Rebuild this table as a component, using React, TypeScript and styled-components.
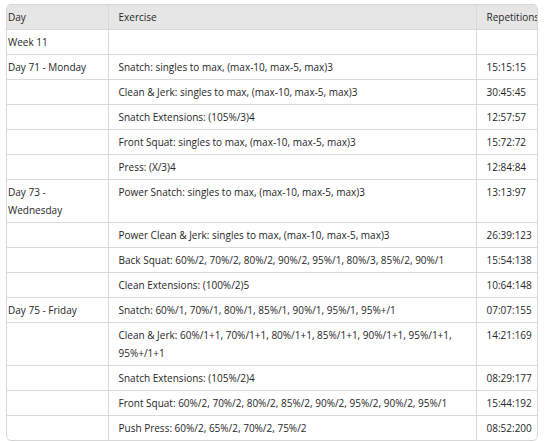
import React from "react";
import styled, { createGlobalStyle } from "styled-components";

const Global = createGlobalStyle`
  html, body { margin: 0; padding: 0; background: #ffffff; }
  body { font-family: "Open Sans", "Noto Sans", sans-serif; }
`;

const Page = styled.div`
  padding: 4px 0 0 6px;
`;

const Frame = styled.div`
  width: 530px;
  border: 1px solid #d6d6d6;
  border-radius: 5px;
  overflow: hidden;
`;

const Table = styled.table`
  border-collapse: collapse;
  table-layout: fixed;
  width: 560px;
  font-size: 10px;
  line-height: 18px;
  color: #262626;
`;

const HeadRow = styled.tr`
  background: #e6e6e6;
`;

const Cell = styled.td<{ $first?: boolean }>`
  padding: 3px 10px 3px ${(p) => (p.$first ? "1px" : "10px")};
  vertical-align: top;
  text-align: left;
  font-weight: normal;
  border-top: 1px solid #d9d9d9;
  border-left: ${(p) => (p.$first ? "none" : "1px solid #d9d9d9")};
`;

const HeadCell = styled(Cell).attrs({ as: "th" })`
  border-top: none;
`;

const Line = styled.span`
  display: block;
  white-space: nowrap;
`;

type Row = { day?: string; ex: string[]; reps: string };

const rows: Row[] = [
  { day: "Week 11", ex: [], reps: "" },
  { day: "Day 71 - Monday", ex: ["Snatch: singles to max, (max-10, max-5, max)3"], reps: "15:15:15" },
  { ex: ["Clean & Jerk: singles to max, (max-10, max-5, max)3"], reps: "30:45:45" },
  { ex: ["Snatch Extensions: (105%/3)4"], reps: "12:57:57" },
  { ex: ["Front Squat: singles to max, (max-10, max-5, max)3"], reps: "15:72:72" },
  { ex: ["Press: (X/3)4"], reps: "12:84:84" },
  { day: "Day 73 - Wednesday", ex: ["Power Snatch: singles to max, (max-10, max-5, max)3"], reps: "13:13:97" },
  { ex: ["Power Clean & Jerk: singles to max, (max-10, max-5, max)3"], reps: "26:39:123" },
  { ex: ["Back Squat: 60%/2, 70%/2, 80%/2, 90%/2, 95%/1, 80%/3, 85%/2, 90%/1"], reps: "15:54:138" },
  { ex: ["Clean Extensions: (100%/2)5"], reps: "10:64:148" },
  { day: "Day 75 - Friday", ex: ["Snatch: 60%/1, 70%/1, 80%/1, 85%/1, 90%/1, 95%/1, 95%+/1"], reps: "07:07:155" },
  {
    ex: ["Clean & Jerk: 60%/1+1, 70%/1+1, 80%/1+1, 85%/1+1, 90%/1+1, 95%/1+1,", "95%+/1+1"],
    reps: "14:21:169",
  },
  { ex: ["Snatch Extensions: (105%/2)4"], reps: "08:29:177" },
  { ex: ["Front Squat: 60%/2, 70%/2, 80%/2, 85%/2, 90%/2, 95%/2, 90%/2, 95%/1"], reps: "15:44:192" },
  { ex: ["Push Press: 60%/2, 65%/2, 70%/2, 75%/2"], reps: "08:52:200" },
];

export default function App() {
  return (
    <Page>
      <Global />
      <Frame>
        <Table>
          <colgroup>
            <col style={{ width: 101 }} />
            <col style={{ width: 368 }} />
            <col style={{ width: 91 }} />
          </colgroup>
          <thead>
            <HeadRow>
              <HeadCell $first>Day</HeadCell>
              <HeadCell>Exercise</HeadCell>
              <HeadCell>Repetitions</HeadCell>
            </HeadRow>
          </thead>
          <tbody>
            {rows.map((r, i) => (
              <tr key={i}>
                <Cell $first>{r.day ?? ""}</Cell>
                <Cell>
                  {r.ex.map((t, j) => (
                    <Line key={j}>{t}</Line>
                  ))}
                </Cell>
                <Cell>{r.reps}</Cell>
              </tr>
            ))}
          </tbody>
        </Table>
      </Frame>
    </Page>
  );
}
